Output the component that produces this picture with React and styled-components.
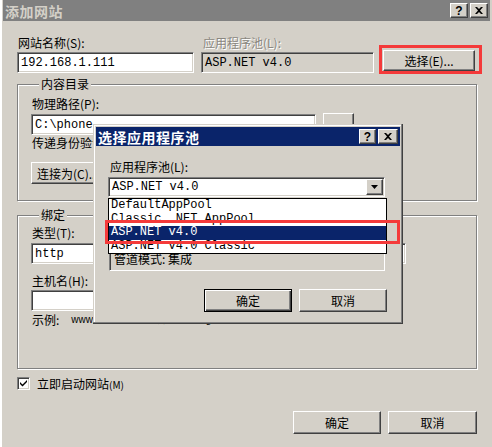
import React from 'react'
import styled, { createGlobalStyle, css } from 'styled-components'

const GlobalStyle = createGlobalStyle`
  html, body { margin: 0; padding: 0; background: #d4d0c8; }
  body {
    font-family: "Noto Sans CJK SC", "Liberation Sans", sans-serif;
    font-size: 12px;
    color: #000;
  }
`

const raised = css`
  background: #d4d0c8;
  border: 1px solid;
  border-color: #fff #404040 #404040 #fff;
  box-shadow: inset -1px -1px #808080;
`

const sunken = css`
  border: 1px solid;
  border-color: #808080 #fff #fff #808080;
  box-shadow: inset 1px 1px #404040, inset -1px -1px #d4d0c8;
`

const mono = css`
  font-family: "Liberation Mono", "DejaVu Sans Mono", monospace;
  font-size: 12px;
`

const Window = styled.div`
  position: relative;
  width: 492px;
  height: 447px;
  box-sizing: border-box;
  padding: 0 2px 0 3px;
  background: #d4d0c8;
  box-shadow: inset 2px 0 #fff;
  overflow: hidden;
  display: flex;
  flex-direction: column;
`

const TitleBar = styled.div`
  height: ${p => p.$h}px;
  flex: none;
  display: flex;
  align-items: center;
  padding: 0 2px 0 2px;
  background: ${p => (p.$active ? '#0a246a' : '#808080')};
  color: ${p => (p.$active ? '#fff' : '#d4d0c8')};
  font-weight: bold;
  font-size: 14px;
`

const Caption = styled.div`
  flex: 1;
  line-height: 18px;
  letter-spacing: 0.5px;
`

const CapButtons = styled.div`
  display: flex;
  gap: 2px;
`

const CapButton = styled.div`
  ${raised}
  box-sizing: border-box;
  width: ${p => p.$w || 17}px;
  height: 15px;
  display: flex;
  align-items: center;
  justify-content: center;
  color: #000;
  font: bold 12px "Liberation Sans", sans-serif;
`

const Body = styled.div`
  padding: 15px 13px 0 14px;
  display: flex;
  flex-direction: column;
`

const TopGrid = styled.div`
  display: grid;
  grid-template-columns: 177px 173px 94px;
  column-gap: 7px;
  row-gap: 2px;
`

const Label = styled.div`
  line-height: 14px;
  height: 14px;
  white-space: nowrap;
  margin-top: ${p => p.$mt || 0}px;
  margin-left: ${p => p.$ml || 0}px;
  color: ${p => (p.$disabled ? '#8a8780' : '#000')};
  ${p => p.$disabled && css`text-shadow: 1px 1px #fff;`}
`

const Field = styled.div`
  ${sunken}
  ${mono}
  box-sizing: border-box;
  position: relative;
  height: ${p => p.$h || 21}px;
  width: ${p => (p.$w ? `${p.$w}px` : 'auto')};
  margin-top: ${p => p.$mt || 0}px;
  margin-left: ${p => p.$ml || 0}px;
  background: ${p => (p.$disabled ? '#d4d0c8' : '#fff')};
  padding: 0 3px;
  display: flex;
  align-items: center;
  white-space: nowrap;
  overflow: hidden;
`

const Button = styled.button`
  ${raised}
  box-sizing: border-box;
  width: ${p => (p.$w ? `${p.$w}px` : 'auto')};
  height: ${p => p.$h || 23}px;
  margin-top: ${p => p.$mt || 0}px;
  margin-left: ${p => p.$ml || 0}px;
  padding: 0;
  font: 12px "Noto Sans CJK SC", sans-serif;
  color: #000;
  text-align: ${p => p.$align || 'center'};
  ${p => p.$pl && css`padding-left: ${p.$pl}px;`}
  ${p => p.$default && css`
    border-color: #000;
    box-shadow: inset 1px 1px #fff, inset -1px -1px #404040, inset -2px -2px #808080;
  `}
`

const Row = styled.div`
  display: flex;
  align-items: flex-start;
  gap: ${p => p.$gap || 0}px;
  margin-top: ${p => p.$mt || 0}px;
`

const Group = styled.fieldset`
  margin: ${p => p.$mt}px 0 0;
  padding: 0 0 ${p => p.$pb}px 13px;
  border: 1px solid #808080;
  box-shadow: inset 1px 1px #fff, 1px 1px #fff;
  min-width: 0;
  display: flex;
  flex-direction: column;
`

const Legend = styled.legend`
  margin-left: 8px;
  padding: 0 2px;
  line-height: 14px;
  background: #d4d0c8;
`

const BindGrid = styled.div`
  display: grid;
  grid-template-columns: 100px 203px 56px;
  column-gap: 8px;
  row-gap: 3px;
  margin-top: 4px;
`

const Example = styled.span`
  margin-left: 12px;
  font: 10px "Liberation Sans", sans-serif;
  vertical-align: 2px;
`

const CheckRow = styled.label`
  display: flex;
  align-items: center;
  gap: 7px;
  margin-top: 7px;
  height: 14px;
`

const CheckBox = styled.span`
  ${sunken}
  box-sizing: border-box;
  width: 13px;
  height: 13px;
  background: #fff;
  display: flex;
  align-items: center;
  justify-content: center;
`

const Small = styled.span`
  font-size: 10px;
`

const Footer = styled.div`
  display: flex;
  justify-content: flex-end;
  gap: 7px;
  margin-top: ${p => p.$mt}px;
`

const DropButton = styled.div`
  ${raised}
  box-sizing: border-box;
  position: absolute;
  right: 1px;
  top: 1px;
  width: 17px;
  height: calc(100% - 2px);
  display: flex;
  align-items: center;
  justify-content: center;
`

/* child dialog, a window over the first one */
const Dialog = styled.div`
  position: absolute;
  left: 93px;
  top: 124px;
  width: 310px;
  height: 200px;
  box-sizing: border-box;
  padding: 3px;
  background: #d4d0c8;
  box-shadow: inset -1px -1px #404040, inset -2px -2px #808080, inset 1px 1px #d4d0c8, inset 2px 2px #fff;
  display: flex;
  flex-direction: column;
`

const DialogBody = styled.div`
  padding: 0 13px 0 12px;
  display: flex;
  flex-direction: column;
`

const InfoBox = styled.div`
  ${sunken}
  box-sizing: border-box;
  width: 276px;
  height: 52px;
  margin: 22px 0 0 1px;
  background: #d4d0c8;
  padding: 0 4px 4px;
  display: flex;
  flex-direction: column;
  justify-content: flex-end;
  line-height: 14px;
`

const DropList = styled.div`
  position: absolute;
  left: 15px;
  top: 74px;
  width: 279px;
  height: 56px;
  box-sizing: border-box;
  border: 1px solid #000;
  background: #fff;
  overflow: hidden;
`

const ListItem = styled.div`
  ${mono}
  height: 13.5px;
  line-height: 13.5px;
  padding-left: 2px;
  white-space: nowrap;
  background: ${p => (p.$selected ? '#0a246a' : 'transparent')};
  color: ${p => (p.$selected ? '#fff' : '#000')};
`

const Mark = styled.div`
  position: absolute;
  left: ${p => p.$x}px;
  top: ${p => p.$y}px;
  width: ${p => p.$w}px;
  height: ${p => p.$h}px;
  box-sizing: border-box;
  border: 3px solid #f43a3a;
  pointer-events: none;
`

const CloseIcon = () => (
  <svg width="8" height="7" viewBox="0 0 8 7">
    <path d="M0 0h2l2 2 2-2h2L5 3.5 8 7H6L4 5 2 7H0l3-3.5z" fill="#000" />
  </svg>
)

const Arrow = () => (
  <svg width="7" height="4" viewBox="0 0 7 4">
    <polygon points="0,0 7,0 3.5,4" fill="#000" />
  </svg>
)

const Check = () => (
  <svg width="7" height="7" viewBox="0 0 7 7">
    <path d="M0 2l2.5 2.5L7 0v2L2.5 6.5 0 4z" fill="#000" />
  </svg>
)

const Combo = ({ children, ...rest }) => (
  <Field {...rest}>
    {children}
    <DropButton><Arrow /></DropButton>
  </Field>
)

const pools = ['DefaultAppPool', 'Classic .NET AppPool', 'ASP.NET v4.0', 'ASP.NET v4.0 Classic']

const App = () => (
  <>
    <GlobalStyle />
    <Window>
      <TitleBar $h={21}>
        <Caption>添加网站</Caption>
        <CapButtons>
          <CapButton $w={18}>?</CapButton>
          <CapButton $w={18}><CloseIcon /></CapButton>
        </CapButtons>
      </TitleBar>

      <Body>
        <TopGrid>
          <Label $ml={1}>网站名称(S):</Label>
          <Label $ml={2} $disabled>应用程序池(L):</Label>
          <div />
          <Field>192.168.1.111</Field>
          <Field $disabled>ASP.NET v4.0</Field>
          <Button $h={21} $mt={-2} $ml={2}>选择(E)...</Button>
        </TopGrid>

        <Group $mt={4} $pb={16}>
          <Legend>内容目录</Legend>
          <Label $mt={6} $ml={1}>物理路径(P):</Label>
          <Row $mt={2} $gap={7}>
            <Field $w={285} $mt={1}>C:\phone</Field>
            <Button $w={31} $h={21}>...</Button>
          </Row>
          <Label $mt={1} $ml={1}>传递身份验证</Label>
          <Button $w={80} $h={22} $mt={12} $align="left" $pl={5}>连接为(C)...</Button>
        </Group>

        <Group $mt={7} $pb={41}>
          <Legend>绑定</Legend>
          <BindGrid>
            <Label $ml={1}>类型(T):</Label>
            <div />
            <Label>端口(O):</Label>
            <Combo>http</Combo>
            <Combo />
            <Field>80</Field>
          </BindGrid>
          <Label $mt={10} $ml={1}>主机名(H):</Label>
          <Field $w={330} $mt={2} />
          <Label $mt={2} $ml={1}>
            示例:<Example>www.contoso.com 或 marketing.contoso.com</Example>
          </Label>
        </Group>

        <CheckRow>
          <CheckBox><Check /></CheckBox>
          <span>立即启动网站<Small>(M)</Small></span>
        </CheckRow>

        <Footer $mt={21}>
          <Button $w={88}>确定</Button>
          <Button $w={89}>取消</Button>
        </Footer>
      </Body>

      <Dialog>
        <TitleBar $h={19} $active>
          <Caption>选择应用程序池</Caption>
          <CapButtons>
            <CapButton $w={17}>?</CapButton>
            <CapButton $w={20}><CloseIcon /></CapButton>
          </CapButtons>
        </TitleBar>
        <DialogBody>
          <Label $mt={14} $ml={2}>应用程序池(L):</Label>
          <Combo $w={277} $h={20} $mt={3}>ASP.NET v4.0</Combo>
          <InfoBox>
            <div>管道模式: 集成</div>
          </InfoBox>
          <Footer $mt={18}>
            <Button $w={88} $default>确定</Button>
            <Button $w={88}>取消</Button>
          </Footer>
        </DialogBody>
        <DropList>
          {pools.map((name, idx) => (
            <ListItem key={idx} $selected={idx === 2}>{name}</ListItem>
          ))}
        </DropList>
      </Dialog>

      <Mark $x={379} $y={45} $w={103} $h={29} />
      <Mark $x={105} $y={220} $w={295} $h={24} />
    </Window>
  </>
)

export default App
